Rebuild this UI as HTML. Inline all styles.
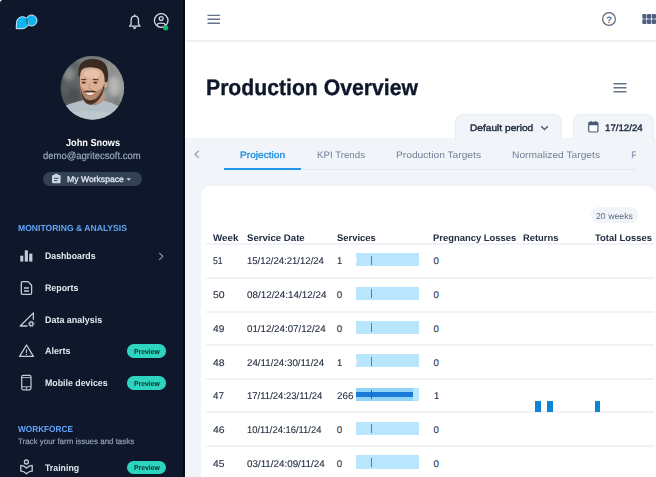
<!DOCTYPE html>
<html lang="en">
<head>
<meta charset="utf-8">
<title>Production Overview</title>
<style>
*{box-sizing:border-box;margin:0;padding:0}
html,body{width:656px;height:477px;overflow:hidden;background:#fff}
body{font-family:"Liberation Sans",Arial,sans-serif;position:relative;color:#1e293b}
.a{position:absolute}
.t{text-rendering:geometricPrecision;position:absolute;white-space:nowrap;line-height:normal;transform-origin:0 0}
#side{position:absolute;left:0;top:0;width:184.7px;height:477px;background:#0f172a}
#tabs{position:absolute;left:185px;top:138px;width:471px;height:339px;background:#f1f5f9}
.pill{position:absolute;top:114px;height:26px;background:#f1f5f9;border-radius:7.5px 7.5px 0 0;border:1px solid #e8edf3;border-bottom:none}
#card{position:absolute;left:200.5px;top:185.5px;width:455.5px;height:300px;background:#fff;border-radius:10px 10px 0 0}
.rl{position:absolute;left:206px;width:448px;height:2.1px;background:#eff2f7}
.bar{position:absolute;left:356.2px;width:63px;height:13.2px;background:#bae6fd}
.tick{position:absolute;left:370.6px;width:1.9px;height:9px;background:#1a8fe0}
.badge{position:absolute;left:127.1px;width:39.4px;height:13.5px;border-radius:6.75px;background:#2dd4bf}
svg{position:absolute;left:0;top:0;overflow:visible}

</style>
</head>
<body>
<div id="side"></div>
<div class="a" style="left:183.3px;top:0;width:1.4px;height:477px;background:#050b18"></div>
<!-- header border -->
<div class="a" style="left:186px;top:40.1px;width:470px;height:2.1px;background:#eeeff1"></div>
<div id="tabs"></div>
<div class="pill" style="left:455px;width:107px"></div>
<div class="pill" style="left:572.7px;width:81px"></div>
<div class="a" style="left:224px;top:169px;width:411.5px;height:1px;background:#e2e8f0"></div>
<div class="a" style="left:223.8px;top:168.2px;width:77px;height:2px;background:#2196e8"></div>
<div class="a" style="left:631.2px;top:148px;width:4.6px;height:14px;overflow:hidden"><div class="t" style="left:0;top:0.85px;font-size:9.4px;color:#728097;transform:scaleX(1.0)">F</div></div>
<div id="card"></div>
<div class="a" style="left:591px;top:207.3px;width:47.3px;height:16px;border-radius:8px;background:#f1f5f9"></div>
<div class="badge" style="top:344.3px"></div>
<div class="badge" style="top:376.1px"></div>
<div class="badge" style="top:460.6px"></div>
<div class="a" style="left:42.9px;top:171.5px;width:99.1px;height:14.6px;border-radius:7.3px;background:#334155"></div>

<div class="rl" style="top:243.4px"></div>
<div class="rl" style="top:276.9px"></div>
<div class="rl" style="top:310.5px"></div>
<div class="rl" style="top:344.1px"></div>
<div class="rl" style="top:377.6px"></div>
<div class="rl" style="top:411.2px"></div>
<div class="rl" style="top:444.9px"></div>

<div class="bar" style="top:253.2px"></div><div class="a" style="left:356.2px;top:257.4px;width:0.8px;height:5.6px;background:#e6f2fb"></div><div class="tick" style="top:255.5px"></div>
<div class="bar" style="top:286.9px"></div><div class="tick" style="top:289.2px"></div>
<div class="bar" style="top:320.6px"></div><div class="tick" style="top:322.9px"></div>
<div class="bar" style="top:354.3px"></div><div class="a" style="left:356.2px;top:358.5px;width:0.8px;height:5.6px;background:#e6f2fb"></div><div class="tick" style="top:356.6px"></div>
<div class="bar" style="top:388.0px"></div><div class="a" style="left:356.2px;top:388.0px;width:57px;height:13.2px;background:#93d5f9"></div><div class="a" style="left:356.2px;top:392.0px;width:57px;height:4.8px;background:#1a7ad9"></div><div class="tick" style="top:390.0px;background:#1769c4"></div>
<div class="bar" style="top:421.7px"></div><div class="tick" style="top:424.0px"></div>
<div class="bar" style="top:455.4px"></div><div class="tick" style="top:457.7px"></div>

<div class="a" style="left:534.7px;top:401px;width:6.2px;height:11.3px;background:#0d85d6"></div>
<div class="a" style="left:546.6px;top:401px;width:6.2px;height:11.3px;background:#0d85d6"></div>
<div class="a" style="left:595.1px;top:401px;width:5.3px;height:11.3px;background:#0d85d6"></div>

<svg width="656" height="477" viewBox="0 0 656 477">
  <defs>
    <clipPath id="avc"><circle cx="92.4" cy="87.9" r="31.8"/></clipPath>
    <filter id="bl" x="-10%" y="-10%" width="120%" height="120%"><feGaussianBlur stdDeviation="0.7"/></filter>
    <filter id="bl2" x="-20%" y="-20%" width="140%" height="140%"><feGaussianBlur stdDeviation="2"/></filter>
    <linearGradient id="bgg" x1="0" y1="0" x2="1" y2="0"><stop offset="0" stop-color="#4f5456"/><stop offset="0.5" stop-color="#6f7373"/><stop offset="1" stop-color="#9c9f9c"/></linearGradient>
  </defs>
  <!-- window corner -->
  <path d="M0 0 H2.4 Q0.4 0.4 0 2.4 Z" fill="#fff"/>
  <!-- logo -->
  <clipPath id="lgc"><circle cx="31.5" cy="20.5" r="5.2"/></clipPath>
  <circle cx="31.5" cy="20.5" r="5.5" fill="#10b4ee" stroke="#d4effc" stroke-width="1"/>
  <path id="lgl" d="M16.2 28.7 L16.5 22.4 A6 6 0 0 1 22.5 16.7 A6 6 0 0 1 28.5 22.7 A6 6 0 0 1 22.5 28.7 Z" fill="#10b4ee" stroke="#d4effc" stroke-width="1" stroke-linejoin="round"/>
  <path d="M26.3 17.6 C28.6 18.8 29.2 22.6 27.9 25.2 C25.4 23.6 24.8 20 26.3 17.6 Z" fill="#1388b8"/>
  <!-- bell -->
  <g fill="none" stroke="#cfd8e6" stroke-width="1.3" stroke-linecap="round" stroke-linejoin="round">
    <path d="M134.8 16.1 C132.2 16.1 131.1 18.2 131.1 20.4 V24.2 L129.6 26.2 H140 L138.5 24.2 V20.4 C138.5 18.2 137.4 16.1 134.8 16.1 Z"/>
    <path d="M134.8 14.9 V15.9"/><path d="M133.5 27.6 H136.1 L134.8 28.9 Z" fill="#cfd8e6" stroke-width="0.8"/>
  </g>
  <!-- user -->
  <g fill="none" stroke="#cfd8e6" stroke-width="1.3">
    <circle cx="161.2" cy="20.5" r="6.8"/>
    <circle cx="161.2" cy="18.5" r="1.9"/>
    <path d="M156.9 25 C157.8 22.6 164.6 22.6 165.5 25"/>
  </g>
  <circle cx="165.7" cy="27.8" r="2.6" fill="#12b76a"/>

  <!-- avatar -->
  <g clip-path="url(#avc)">
    <rect x="60" y="55" width="66" height="66" fill="url(#bgg)"/>
    <g filter="url(#bl2)">
      <ellipse cx="114" cy="86" rx="6" ry="10" fill="#b6b7b3"/>
      <ellipse cx="111" cy="68" rx="8" ry="5" fill="#8f918f"/>
      <ellipse cx="69" cy="74" rx="6" ry="7" fill="#868b8b"/>
      <ellipse cx="73" cy="96" rx="8" ry="8" fill="#4b5053"/>
      <ellipse cx="66" cy="88" rx="4" ry="6" fill="#5b6062"/>
      <ellipse cx="117" cy="102" rx="5" ry="6" fill="#7d807e"/>
      <ellipse cx="84" cy="59" rx="9" ry="4" fill="#777c7c"/>
      <ellipse cx="104" cy="96" rx="3" ry="5" fill="#a5a7a3"/>
    </g>
    <g filter="url(#bl)">
      <!-- shirt -->
      <path d="M58 124 L61.5 108.5 C67 104 76 102 84 100 C88 106.5 98 106.5 103 100.5 C110 102 118 105 123.5 110.5 L126 124 Z" fill="#b3bec6"/>
      <path d="M70 113 C80 110 100 110 114 114 L116 124 L68 124 Z" fill="#c2cbd1" opacity="0.7"/>
      <!-- neck -->
      <path d="M84 94 L84 101 C88 106 98 106 103.2 100.6 L103.2 90 Z" fill="#c3957b"/>
      <!-- ear -->
      <ellipse cx="105.4" cy="84.8" rx="1.5" ry="3" fill="#d6a88e"/>
      <!-- face -->
      <path d="M80 74 C80 65 104.4 65 104.4 75 L104.4 86 C104.2 95 96.5 104.2 90.3 104.2 C84.8 104.2 80.2 96 80 88 Z" fill="#dcae93"/>
      <path d="M80.2 84 C82 88 84 89.6 86 89.8 L84 96 C81.5 93 80.2 89 80.2 84 Z M104.2 84 C102.6 88 100 89.6 97.6 89.8 L100 96 C103 93 104.2 89 104.2 84 Z" fill="#d39f86" opacity="0.8"/>
      <ellipse cx="92" cy="74" rx="8" ry="4.5" fill="#ecc9b3" opacity="0.7"/>
      <!-- hair -->
      <path d="M78.7 76.4 C77.6 68 80 62 86 60 C91 58.2 99 58.7 103.5 62.3 C108 66 108.8 74 107.6 81.2 L105 82.4 C104.9 76 103.6 71.5 99.5 69 C94 66.6 86 66.8 83 68.2 C80.8 70 80.3 73 80.1 76.6 Z" fill="#3a2a22"/>
      <!-- beard -->
      <path d="M80.1 83 C80.4 90 82.6 95.4 85.6 98.6 C88.4 101 92.6 100.8 95.4 98.6 C99.4 95.4 102.8 90 104.3 83 C105 95 96.8 104.7 90.2 104.7 C84.6 104.7 79.4 96 80.1 83 Z" fill="#4f382b"/>
      <path d="M81.4 87 C83.6 91.4 86 91.6 88 91.2 L92.4 91.2 C94.6 91.6 99.4 91.8 103 87 C102.4 95 96 101 90.4 101 C86 101 81.8 95 81.4 87 Z" fill="#8a6450" opacity="0.5"/>
      <path d="M86 99.2 C88 101.6 92.6 101.6 95 99 C93.6 103.4 87.6 103.6 86 99.2 Z" fill="#3a281f"/>
      <path d="M83 92.3 C85.4 90.5 88 90.3 89.8 90.9 C91.6 90.3 94.6 90.5 97.2 92.3 C94.6 92 92 92.1 89.8 92.1 C87.8 92.1 85.6 92 83 92.3 Z" fill="#4a3428"/>
      <!-- lips + teeth -->
      <path d="M84.8 92.8 C87.5 92.2 92.4 92.2 95 92.8 C93.6 97.3 86.6 97.3 84.8 92.8 Z" fill="#b5705f"/>
      <path d="M85.8 93 C88 92.6 92 92.6 94 93 C93 95.8 87.4 95.8 85.8 93 Z" fill="#f4ebe6"/>
      <!-- eyes / brows / nose -->
      <ellipse cx="83.9" cy="82.2" rx="2.9" ry="1.9" fill="#b98268" opacity="0.55"/><ellipse cx="95.4" cy="82.2" rx="2.9" ry="1.9" fill="#b98268" opacity="0.55"/>
      <ellipse cx="83.7" cy="82.6" rx="1.7" ry="0.95" fill="#3d2c27"/>
      <ellipse cx="95.4" cy="82.6" rx="1.7" ry="0.95" fill="#3d2c27"/>
      <path d="M81 79.7 L86.4 79.3 M92.8 79.3 L98.6 79.8" stroke="#4a362c" stroke-width="1"/>
      <path d="M89.8 83.5 L89 88.4 L91.4 88.8" stroke="#c48f75" stroke-width="0.9" fill="none"/>
    </g>
  </g>

  <!-- workspace clipboard -->
  <rect x="52" y="175" width="8.6" height="8.2" rx="1" fill="#cbd5e1"/>
  <rect x="54.4" y="173.8" width="3.8" height="2.2" rx="0.7" fill="#cbd5e1"/>
  <path d="M54 178.3 H58.6 M54 180.6 H57.4" stroke="#334155" stroke-width="0.9"/>
  <path d="M126.4 178.2 H131 L128.7 180.7 Z" fill="#cbd5e1"/>

  <!-- dashboards -->
  <g fill="#c3cbd7">
    <rect x="20.3" y="255.7" width="3" height="5.9"/><rect x="24.8" y="250.3" width="3.1" height="11.3"/><rect x="29.2" y="253.6" width="3.2" height="8"/>
  </g>
  <path d="M159.2 252.8 L162.8 256.3 L159.2 259.8" fill="none" stroke="#8a97ab" stroke-width="1.1"/>
  <!-- reports -->
  <g fill="none" stroke="#c3cbd7" stroke-width="1.3" stroke-linejoin="round">
    <path d="M22.6 281.6 H28 L31.6 285.2 V293 Q31.6 294.3 30.3 294.3 H22.6 Q21.3 294.3 21.3 293 V282.9 Q21.3 281.6 22.6 281.6 Z"/>
    <path d="M24 288 H29 M24 291 H29"/>
  </g>
  <!-- data analysis -->
  <g fill="none" stroke="#c3cbd7" stroke-width="1.3" stroke-linejoin="round">
    <path d="M27.4 326 H20.2 L33.4 312.9 V319.8"/>
    <circle cx="31.3" cy="323.9" r="1.7" stroke-width="1.3"/>
    <circle cx="31.3" cy="323.9" r="2.8" stroke-width="1" stroke-dasharray="1.1 1.1"/>
  </g>
  <!-- alerts -->
  <g fill="none" stroke="#c3cbd7" stroke-width="1.3" stroke-linejoin="round">
    <path d="M26.5 345 L33.4 356.4 H19.6 Z"/>
    <path d="M26.5 349.6 V353 M26.5 354 V355" stroke-width="1.1"/>
  </g>
  <!-- mobile -->
  <g fill="none" stroke="#c3cbd7" stroke-width="1.2">
    <rect x="21.7" y="375.4" width="9.3" height="14.4" rx="1.5"/>
    <path d="M21.7 377.6 H31 M21.7 386.8 H31 M26.35 386.8 V389.4" stroke-width="0.9"/>
  </g>
  <!-- training -->
  <g fill="none" stroke="#c3cbd7" stroke-width="1.3" stroke-linejoin="round">
    <circle cx="26.4" cy="462" r="2"/>
    <path d="M20.8 465.4 C22.6 465.4 24.8 466.2 26.5 468.2 C28.2 466.2 30.4 465.4 32.2 465.4 V471.2 C30.4 471.2 28.2 472 26.5 473.8 C24.8 472 22.6 471.2 20.8 471.2 Z"/>
  </g>

  <!-- header hamburger -->
  <path d="M207.5 15.4 H220 M207.5 19.3 H220 M207.5 23.2 H220" stroke="#64748b" stroke-width="1.4"/>
  <!-- help -->
  <circle cx="609" cy="19" r="6.4" fill="none" stroke="#56677f" stroke-width="1.2"/>
  <!-- apps grid -->
  <g fill="#4f6180">
    <rect x="642.3" y="14" width="4.2" height="4.7" rx="1"/><rect x="647" y="14" width="4.2" height="4.7" rx="1"/><rect x="651.7" y="14" width="4.3" height="4.7" rx="1"/>
    <rect x="642.3" y="19.2" width="4.2" height="4.7" rx="1"/><rect x="647" y="19.2" width="4.2" height="4.7" rx="1"/><rect x="651.7" y="19.2" width="4.3" height="4.7" rx="1"/>
  </g>
  <!-- title hamburger -->
  <path d="M613.5 83.7 H626.5 M613.5 87.7 H626.5 M613.5 91.7 H626.5" stroke="#64748b" stroke-width="1.4"/>
  <!-- pill chevron -->
  <path d="M541.2 126.2 L544.5 129.5 L547.8 126.2" fill="none" stroke="#4b5b78" stroke-width="1.4"/>
  <!-- calendar -->
  <rect x="588.7" y="122.4" width="9.2" height="9.6" rx="1.3" fill="#fbfcfe" stroke="#4a5a74" stroke-width="1.2"/>
  <rect x="588.7" y="122.4" width="9.2" height="2.8" fill="#4a5a74"/>
  <path d="M590.9 121 V123 M595.7 121 V123" stroke="#4a5a74" stroke-width="1.1"/>
  <!-- tab prev -->
  <path d="M198.8 150.8 L195 154.3 L198.8 157.8" fill="none" stroke="#9aa7ba" stroke-width="1.5"/>
</svg>
<div class="t" style="left:606.3px;top:13.6px;font-size:9.4px;font-weight:bold;color:#56677f">?</div>

<!-- text layer -->
<div class="t" style="left:65.75px;top:137.87px;font-size:10.2px;color:#ffffff;font-weight:bold;transform:scaleX(0.9017)">John Snows</div>
<div class="t" style="left:43.45px;top:150.87px;font-size:10.2px;color:#99a9bf;font-weight:normal;-webkit-text-stroke:0.18px currentColor;transform:scaleX(0.9304)">demo@agritecsoft.com</div>
<div class="t" style="left:66.55px;top:173.91px;font-size:8.5px;color:#e2e8f0;font-weight:normal;-webkit-text-stroke:0.3px currentColor;transform:scaleX(1.0149)">My Workspace</div>
<div class="t" style="left:18.15px;top:223.14px;font-size:8.8px;color:#60a5fa;font-weight:bold;transform:scaleX(0.9757)">MONITORING &amp; ANALYSIS</div>
<div class="t" style="left:44.55px;top:250.29px;font-size:9.4px;color:#e2e8f0;font-weight:bold;transform:scaleX(0.9319)">Dashboards</div>
<div class="t" style="left:44.55px;top:282.19px;font-size:9.4px;color:#e2e8f0;font-weight:bold;transform:scaleX(0.9401)">Reports</div>
<div class="t" style="left:44.55px;top:313.69px;font-size:9.4px;color:#e2e8f0;font-weight:bold;transform:scaleX(0.9527)">Data analysis</div>
<div class="t" style="left:44.55px;top:345.29px;font-size:9.4px;color:#e2e8f0;font-weight:bold;transform:scaleX(0.9594)">Alerts</div>
<div class="t" style="left:44.55px;top:377.09px;font-size:9.4px;color:#e2e8f0;font-weight:bold;transform:scaleX(0.9385)">Mobile devices</div>
<div class="t" style="left:45.05px;top:461.99px;font-size:9.4px;color:#e2e8f0;font-weight:bold;transform:scaleX(0.9350)">Training</div>
<div class="t" style="left:18.15px;top:423.64px;font-size:8.8px;color:#60a5fa;font-weight:bold;transform:scaleX(0.9362)">WORKFORCE</div>
<div class="t" style="left:18.15px;top:436.76px;font-size:8.0px;color:#94a3b8;font-weight:normal;-webkit-text-stroke:0.18px currentColor;transform:scaleX(0.9925)">Track your farm issues and tasks</div>
<div class="t" style="left:134.35px;top:347.08px;font-size:7.2px;color:#062b29;font-weight:bold;transform:scaleX(0.9495)">Preview</div>
<div class="t" style="left:134.35px;top:378.98px;font-size:7.2px;color:#062b29;font-weight:bold;transform:scaleX(0.9495)">Preview</div>
<div class="t" style="left:134.35px;top:463.28px;font-size:7.2px;color:#062b29;font-weight:bold;transform:scaleX(0.9495)">Preview</div>
<div class="t" style="left:206.15px;top:74.93px;font-size:22.4px;color:#0f172a;font-weight:bold;-webkit-text-stroke:0.35px currentColor;transform:scaleX(0.9461)">Production Overview</div>
<div class="t" style="left:469.55px;top:122.39px;font-size:9.4px;color:#232e41;font-weight:normal;-webkit-text-stroke:0.4px currentColor;transform:scaleX(1.0827)">Default period</div>
<div class="t" style="left:605.05px;top:122.39px;font-size:9.4px;color:#232e41;font-weight:normal;-webkit-text-stroke:0.4px currentColor;transform:scaleX(1.0329)">17/12/24</div>
<div class="t" style="left:240.35px;top:148.99px;font-size:9.4px;color:#1a8fe0;font-weight:normal;-webkit-text-stroke:0.3px currentColor;transform:scaleX(1.0815)">Projection</div>
<div class="t" style="left:316.55px;top:148.99px;font-size:9.4px;color:#728097;font-weight:normal;transform:scaleX(1.0347)">KPI Trends</div>
<div class="t" style="left:395.55px;top:148.99px;font-size:9.4px;color:#728097;font-weight:normal;transform:scaleX(1.0897)">Production Targets</div>
<div class="t" style="left:512.05px;top:148.99px;font-size:9.4px;color:#728097;font-weight:normal;transform:scaleX(1.0919)">Normalized Targets</div>
<div class="t" style="left:596.35px;top:210.51px;font-size:8.5px;color:#586880;font-weight:normal;transform:scaleX(1.0272)">20 weeks</div>
<div class="t" style="left:212.55px;top:233.10px;font-size:9.5px;color:#232e41;font-weight:bold;transform:scaleX(1.0302)">Week</div>
<div class="t" style="left:247.25px;top:233.10px;font-size:9.5px;color:#232e41;font-weight:bold;transform:scaleX(1.0114)">Service Date</div>
<div class="t" style="left:336.95px;top:233.10px;font-size:9.5px;color:#232e41;font-weight:bold;transform:scaleX(0.9925)">Services</div>
<div class="t" style="left:433.25px;top:233.10px;font-size:9.5px;color:#232e41;font-weight:bold;transform:scaleX(0.9920)">Pregnancy Losses</div>
<div class="t" style="left:522.75px;top:233.10px;font-size:9.5px;color:#232e41;font-weight:bold;transform:scaleX(0.9859)">Returns</div>
<div class="t" style="left:595.45px;top:233.10px;font-size:9.5px;color:#232e41;font-weight:bold;transform:scaleX(0.9917)">Total Losses</div>
<div class="t" style="left:212.55px;top:256.42px;font-size:9.7px;color:#232e41;font-weight:normal;-webkit-text-stroke:0.1px currentColor;transform:scaleX(0.8904)">51</div>
<div class="t" style="left:247.25px;top:256.42px;font-size:9.7px;color:#232e41;font-weight:normal;-webkit-text-stroke:0.1px currentColor;transform:scaleX(0.9843)">15/12/24:21/12/24</div>
<div class="t" style="left:337.40px;top:256.42px;font-size:9.7px;color:#232e41;font-weight:normal;-webkit-text-stroke:0.1px currentColor;transform:scaleX(0.9800)">1</div>
<div class="t" style="left:433.60px;top:256.42px;font-size:9.7px;color:#232e41;font-weight:normal;-webkit-text-stroke:0.1px currentColor;transform:scaleX(1.0000)">0</div>
<div class="t" style="left:212.55px;top:290.12px;font-size:9.7px;color:#232e41;font-weight:normal;-webkit-text-stroke:0.1px currentColor;transform:scaleX(1.0806)">50</div>
<div class="t" style="left:247.25px;top:290.12px;font-size:9.7px;color:#232e41;font-weight:normal;-webkit-text-stroke:0.1px currentColor;transform:scaleX(1.0163)">08/12/24:14/12/24</div>
<div class="t" style="left:336.80px;top:290.12px;font-size:9.7px;color:#232e41;font-weight:normal;-webkit-text-stroke:0.1px currentColor;transform:scaleX(1.0000)">0</div>
<div class="t" style="left:433.60px;top:290.12px;font-size:9.7px;color:#232e41;font-weight:normal;-webkit-text-stroke:0.1px currentColor;transform:scaleX(1.0000)">0</div>
<div class="t" style="left:212.55px;top:323.82px;font-size:9.7px;color:#232e41;font-weight:normal;-webkit-text-stroke:0.1px currentColor;transform:scaleX(1.0481)">49</div>
<div class="t" style="left:247.25px;top:323.82px;font-size:9.7px;color:#232e41;font-weight:normal;-webkit-text-stroke:0.1px currentColor;transform:scaleX(1.0061)">01/12/24:07/12/24</div>
<div class="t" style="left:336.80px;top:323.82px;font-size:9.7px;color:#232e41;font-weight:normal;-webkit-text-stroke:0.1px currentColor;transform:scaleX(1.0000)">0</div>
<div class="t" style="left:433.60px;top:323.82px;font-size:9.7px;color:#232e41;font-weight:normal;-webkit-text-stroke:0.1px currentColor;transform:scaleX(1.0000)">0</div>
<div class="t" style="left:212.55px;top:357.52px;font-size:9.7px;color:#232e41;font-weight:normal;-webkit-text-stroke:0.1px currentColor;transform:scaleX(1.0806)">48</div>
<div class="t" style="left:247.25px;top:357.52px;font-size:9.7px;color:#232e41;font-weight:normal;-webkit-text-stroke:0.1px currentColor;transform:scaleX(1.0069)">24/11/24:30/11/24</div>
<div class="t" style="left:337.40px;top:357.52px;font-size:9.7px;color:#232e41;font-weight:normal;-webkit-text-stroke:0.1px currentColor;transform:scaleX(0.9800)">1</div>
<div class="t" style="left:433.60px;top:357.52px;font-size:9.7px;color:#232e41;font-weight:normal;-webkit-text-stroke:0.1px currentColor;transform:scaleX(1.0000)">0</div>
<div class="t" style="left:212.55px;top:391.22px;font-size:9.7px;color:#232e41;font-weight:normal;-webkit-text-stroke:0.1px currentColor;transform:scaleX(1.0110)">47</div>
<div class="t" style="left:247.25px;top:391.22px;font-size:9.7px;color:#232e41;font-weight:normal;-webkit-text-stroke:0.1px currentColor;transform:scaleX(0.9834)">17/11/24:23/11/24</div>
<div class="t" style="left:337.05px;top:391.22px;font-size:9.7px;color:#232e41;font-weight:normal;-webkit-text-stroke:0.1px currentColor;transform:scaleX(1.0141)">266</div>
<div class="t" style="left:434.10px;top:391.22px;font-size:9.7px;color:#232e41;font-weight:normal;-webkit-text-stroke:0.1px currentColor;transform:scaleX(0.9800)">1</div>
<div class="t" style="left:212.55px;top:424.92px;font-size:9.7px;color:#232e41;font-weight:normal;-webkit-text-stroke:0.1px currentColor;transform:scaleX(1.0806)">46</div>
<div class="t" style="left:247.25px;top:424.92px;font-size:9.7px;color:#232e41;font-weight:normal;-webkit-text-stroke:0.1px currentColor;transform:scaleX(0.9704)">10/11/24:16/11/24</div>
<div class="t" style="left:336.80px;top:424.92px;font-size:9.7px;color:#232e41;font-weight:normal;-webkit-text-stroke:0.1px currentColor;transform:scaleX(1.0000)">0</div>
<div class="t" style="left:433.60px;top:424.92px;font-size:9.7px;color:#232e41;font-weight:normal;-webkit-text-stroke:0.1px currentColor;transform:scaleX(1.0000)">0</div>
<div class="t" style="left:212.55px;top:458.62px;font-size:9.7px;color:#232e41;font-weight:normal;-webkit-text-stroke:0.1px currentColor;transform:scaleX(1.0574)">45</div>
<div class="t" style="left:247.25px;top:458.62px;font-size:9.7px;color:#232e41;font-weight:normal;-webkit-text-stroke:0.1px currentColor;transform:scaleX(1.0128)">03/11/24:09/11/24</div>
<div class="t" style="left:336.80px;top:458.62px;font-size:9.7px;color:#232e41;font-weight:normal;-webkit-text-stroke:0.1px currentColor;transform:scaleX(1.0000)">0</div>
<div class="t" style="left:433.60px;top:458.62px;font-size:9.7px;color:#232e41;font-weight:normal;-webkit-text-stroke:0.1px currentColor;transform:scaleX(1.0000)">0</div>
</body>
</html>
